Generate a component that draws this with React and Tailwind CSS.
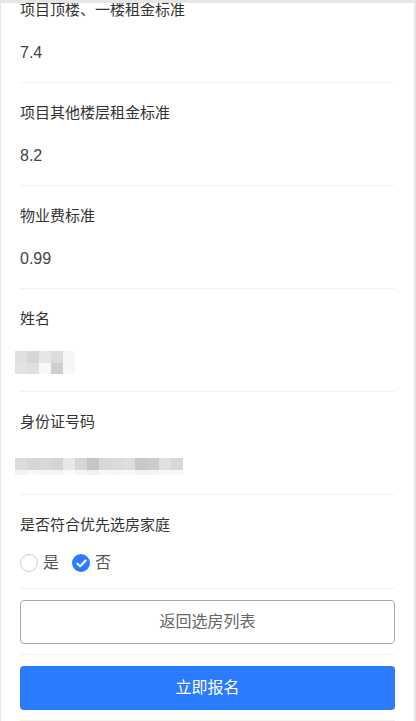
import { Fragment } from 'react'

const rows = [
  { label: '项目顶楼、一楼租金标准', value: '7.4' },
  { label: '项目其他楼层租金标准', value: '8.2' },
  { label: '物业费标准', value: '0.99' },
  { label: '姓名', blur: 'name' },
  { label: '身份证号码', blur: 'id' },
]

// pixelated (mosaic) placeholders for masked personal data
const nameTop = ['#e0e0e0', '#d6d6d6', '#e6e6e6', '#dcdcdc', '#f6f6f6']
const nameBottom = ['#e4e4e4', '#dfdfdf', '#f8f8f8', '#cfcfcf', '#f7f7f7']
const idTop = ['#dcdcdc', '#d6d6d6', '#d8d8d8', '#d4d4d4', '#e8e8e8', '#d6d6d6', '#c6c6c6', '#d8d8d8', '#dadada', '#dedede', '#c8c8c8', '#cccccc', '#e0e0e0', '#d8d8d8']
const idBottom = ['#f3f3f3', '#f8f8f8', '#f6f6f6', '#f4f4f4', '#fafafa', '#f5f5f5', '#f0f0f0', '#f7f7f7', '#f6f6f6', '#f8f8f8', '#f2f2f2', '#f4f4f4', '#f9f9f9', '#f7f7f7']

function Mosaic({ kind }) {
  if (kind === 'name') {
    return (
      <div className="-ml-[5px] flex flex-col">
        <div className="flex">
          {nameTop.map((c, i) => (
            <div key={i} className="h-3 w-3" style={{ backgroundColor: c }} />
          ))}
        </div>
        <div className="flex">
          {nameBottom.map((c, i) => (
            <div key={i} className="h-[11px] w-3" style={{ backgroundColor: c }} />
          ))}
        </div>
      </div>
    )
  }
  return (
    <div className="-ml-[5px] mt-[3px] flex flex-col">
      <div className="flex">
        {idTop.map((c, i) => (
          <div key={i} className="h-3 w-3" style={{ backgroundColor: c }} />
        ))}
      </div>
      <div className="flex">
        {idBottom.map((c, i) => (
          <div key={i} className="h-[5px] w-3" style={{ backgroundColor: c }} />
        ))}
      </div>
    </div>
  )
}

export default function App() {
  return (
    <div
      className="h-[721px] w-[416px] overflow-hidden border-t-[3px] border-l border-r-2 border-[#e6e6e6] bg-white"
      style={{ fontFamily: '"Liberation Sans", "Noto Sans CJK SC", sans-serif' }}
    >
      <div className="-mt-[3px] px-[19px]">
        {rows.map((row, i) => (
          <div
            key={row.label}
            className={`border-b border-[#f2f2f2] pb-[19px] ${i === 0 ? 'pt-0' : 'pt-5'}`}
          >
            <div className="h-5 text-[15px] leading-5 text-[#333]">{row.label}</div>
            <div className="mt-[23px] flex h-5 items-center text-base leading-5 text-[#444]">
              {row.blur ? <Mosaic kind={row.blur} /> : row.value}
            </div>
          </div>
        ))}

        {/* priority family radio */}
        <div className="border-b border-[#f2f2f2] pb-[15px] pt-5">
          <div className="h-5 text-[15px] leading-5 text-[#333]">是否符合优先选房家庭</div>
          <div className="mt-[18px] flex h-5 items-center text-base text-[#555]">
            <span className="h-[18px] w-[18px] rounded-full border border-[#cfcfcf]" />
            <span className="ml-[5px]">是</span>
            <span className="ml-[13px] flex h-[18px] w-[18px] items-center justify-center rounded-full bg-[#2b7bff]">
              <svg width="11" height="9" viewBox="0 0 11 9" fill="none">
                <path d="M1.3 4.6 4.1 7.3 9.7 1.5" stroke="white" strokeWidth="2" strokeLinecap="round" strokeLinejoin="round" />
              </svg>
            </span>
            <span className="ml-[5px]">否</span>
          </div>
        </div>

        <div className="border-b border-[#f2f2f2] pb-[10px] pt-[11px]">
          <button className="flex h-11 w-full items-center justify-center rounded border border-[#aaaaaa] bg-white text-base text-[#666]">
            返回选房列表
          </button>
        </div>

        <div className="border-b border-[#f2f2f2] pb-[10px] pt-[11px]">
          <button className="flex h-11 w-full items-center justify-center rounded bg-[#2b7bff] text-base text-white">
            立即报名
          </button>
        </div>
      </div>
    </div>
  )
}
